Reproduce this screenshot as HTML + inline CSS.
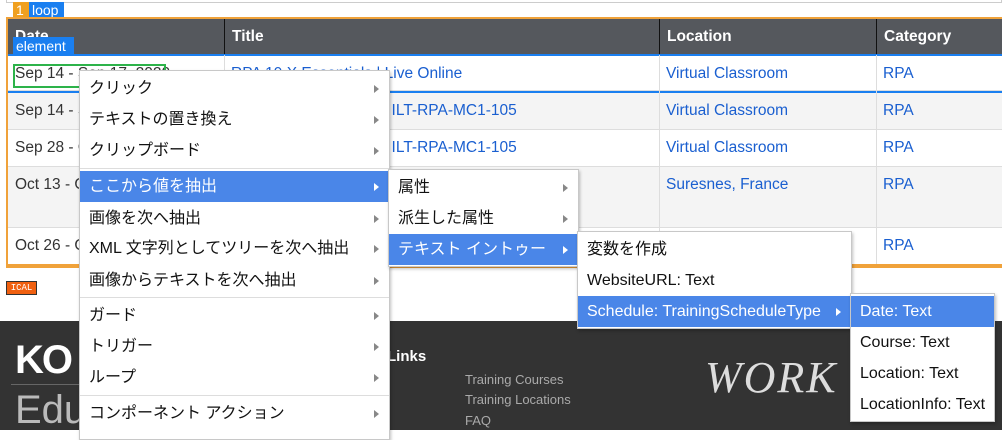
<!DOCTYPE html>
<html><head><meta charset="utf-8"><style>
*{box-sizing:border-box;margin:0;padding:0}
body{width:1002px;height:430px;overflow:hidden;background:#fff;position:relative;font-family:"Liberation Sans","Noto Sans CJK JP",sans-serif}
.a{position:absolute}
.tbl{left:6px;top:17px;width:1000px;height:251px;border:2px solid #f0a23a;border-right:none;background:#fff}
.hd{left:8px;top:19px;width:994px;height:36px;background:#55585d}
.hd div{position:absolute;top:0;height:36px;line-height:36px;color:#fff;font-weight:bold;font-size:15.5px;padding-left:7px;border-left:1px solid #111}
.row{left:8px;width:994px;border-bottom:1px solid #ddd}
.c{position:absolute;font-size:15.5px;padding-left:7px;top:9px;color:#1a5fd0}
.d{color:#333}
.vl{position:absolute;top:55px;height:210px;width:1px;background:#ddd}
.m{position:absolute;background:#fff;border:1px solid #c8c8c8;box-shadow:1px 2px 3px rgba(0,0,0,.25);font-size:16px;color:#111}
.m div{position:relative;height:31px;line-height:31px;padding-left:9px}
.m1 div{position:absolute;left:0;right:0}
.m .h{background:#4a86e8;color:#fff}
.m .s{position:absolute;left:0;right:0;height:1px;padding:0;background:#ddd}
.ar:after{content:"";position:absolute;right:10px;top:12px;border-left:5px solid #888;border-top:4px solid transparent;border-bottom:4px solid transparent}
.h.ar:after{border-left-color:#fff}
.ft{left:0;top:321px;width:1002px;height:109px;background:#333}
.fl{color:#aaa;font-size:13px;position:absolute;left:465px}
</style></head><body>
<div class="a" style="left:6px;top:0;width:996px;height:3px;border:1px solid #ccc;border-top:none"></div>
<div class="a" style="left:13px;top:2px;width:16px;height:17px;background:#f0a020;color:#fff;font-size:14px;line-height:17px;padding-left:3px">1</div>
<div class="a" style="left:29px;top:2px;width:35px;height:17px;background:#1a7ff0;color:#fff;font-size:14px;line-height:17px;padding-left:3px">loop</div>
<div class="a tbl"></div>
<div class="a hd"><div style="left:0;border:none">Date</div><div style="left:216px">Title</div><div style="left:651px">Location</div><div style="left:868px">Category</div></div>
<div class="a" style="left:8px;top:54px;width:994px;height:2px;background:#1a7ff0"></div>
<div class="a row" style="top:56px;height:35px;background:#fff"><span class="c d" style="left:0">Sep 14 - Sep 17, 2020</span><span class="c" style="left:216px">RPA 19.X Essentials | Live Online</span><span class="c" style="left:651px">Virtual Classroom</span><span class="c" style="left:868px">RPA</span></div>
<div class="a" style="left:8px;top:91px;width:994px;height:2px;background:#1a7ff0"></div>
<div class="a row" style="top:93px;height:37px;background:#f4f4f4"><span class="c d" style="left:0">Sep 14 - Sep</span><span class="c" style="left:216px">RPA 19.X Live Online | ILT-RPA-MC1-105</span><span class="c" style="left:651px">Virtual Classroom</span><span class="c" style="left:868px">RPA</span></div>
<div class="a row" style="top:130px;height:37px;background:#fff"><span class="c d" style="left:0">Sep 28 - Oct</span><span class="c" style="left:216px">RPA 19.X Live Online | ILT-RPA-MC1-105</span><span class="c" style="left:651px">Virtual Classroom</span><span class="c" style="left:868px">RPA</span></div>
<div class="a row" style="top:167px;height:61px;background:#f4f4f4"><span class="c d" style="left:0">Oct 13 - Oct</span><span class="c" style="left:216px">RPA 19.X Classroom | Suresnes,</span><span class="c" style="left:651px">Suresnes, France</span><span class="c" style="left:868px">RPA</span></div>
<div class="a row" style="top:228px;height:37px;background:#fff;border:none"><span class="c d" style="left:0">Oct 26 - Oct</span><span class="c" style="left:868px">RPA</span></div>
<div class="vl" style="left:224px"></div><div class="vl" style="left:659px"></div><div class="vl" style="left:876px"></div>
<div class="a" style="left:6px;top:264px;width:996px;height:3px;background:#f0a23a"></div>
<div class="a" style="left:13px;top:64px;width:153px;height:24px;border:2px solid #2db34a"></div>
<div class="a" style="left:13px;top:37px;width:61px;height:18px;background:#1a7ff0;color:#fff;font-size:14px;line-height:18px;padding-left:3px">element</div>
<div class="a" style="left:6px;top:281px;width:31px;height:14px;background:#f06010;border:1px solid #333;color:#fff;font-size:9px;line-height:12px;text-align:center;font-family:'Liberation Mono',monospace">ICAL</div>
<div class="a ft"></div>
<div class="a" style="left:15px;top:338px;color:#fff;font-size:40px;font-weight:900;letter-spacing:-2px">KO</div>
<div class="a" style="left:11px;top:384px;width:70px;height:1px;background:#666"></div>
<div class="a" style="left:15px;top:388px;color:#bbb;font-size:40px">Edu</div>
<div class="a" style="left:382px;top:348px;color:#fff;font-size:15px;font-weight:bold">tLinks</div>
<div class="fl" style="top:372px">Training Courses</div>
<div class="fl" style="top:392px">Training Locations</div>
<div class="fl" style="top:413px">FAQ</div>
<div class="a" style="left:705px;top:352px;color:#ddd;font-size:44px;font-style:italic;font-family:'Liberation Serif',serif;letter-spacing:2px">WORK L</div>
<div class="m m1" style="left:79px;top:70px;width:311px;height:370px">
<div class="ar" style="top:2px">クリック</div><div class="ar" style="top:33px">テキストの置き換え</div><div class="ar" style="top:64px">クリップボード</div>
<span class="s" style="top:97px"></span>
<div class="h ar" style="top:100px">ここから値を抽出</div><div class="ar" style="top:132px">画像を次へ抽出</div><div class="ar" style="top:162px">XML 文字列としてツリーを次へ抽出</div><div class="ar" style="top:194px">画像からテキストを次へ抽出</div>
<span class="s" style="top:226px"></span>
<div class="ar" style="top:229px">ガード</div><div class="ar" style="top:260px">トリガー</div><div class="ar" style="top:291px">ループ</div>
<span class="s" style="top:324px"></span>
<div class="ar" style="top:327px">コンポーネント アクション</div></div>
<div class="m" style="left:388px;top:169px;width:191px;height:98px"><div class="ar" style="margin-top:2px">属性</div><div class="ar">派生した属性</div><div class="h ar">テキスト イントゥー</div></div>
<div class="m" style="left:577px;top:231px;width:275px;height:98px"><div style="margin-top:2px">変数を作成</div><div>WebsiteURL: Text</div><div class="h ar">Schedule: TrainingScheduleType</div></div>
<div class="m" style="left:850px;top:293px;width:145px;height:129px"><div class="h" style="margin-top:2px">Date: Text</div><div>Course: Text</div><div>Location: Text</div><div>LocationInfo: Text</div></div>
</body></html>
